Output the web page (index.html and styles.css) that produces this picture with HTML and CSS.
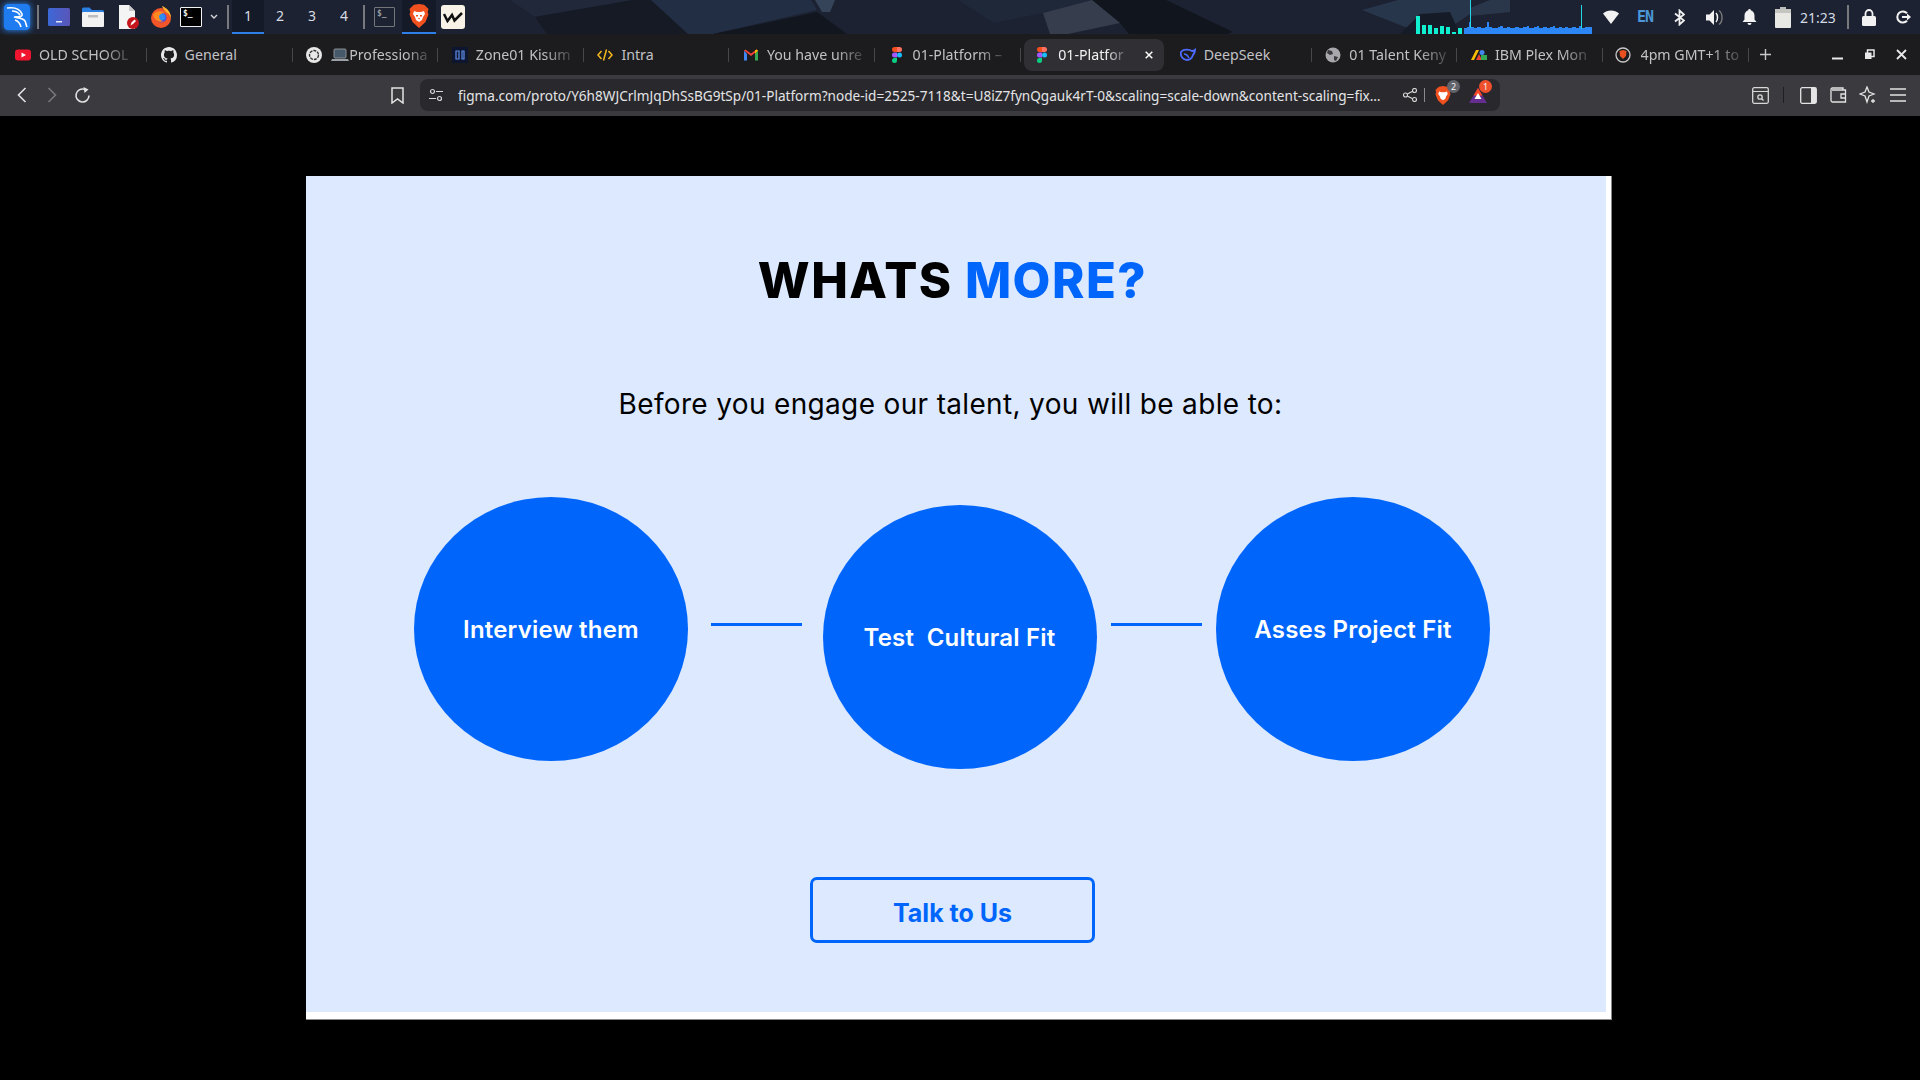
FILE: index.html
```html
<!DOCTYPE html>
<html lang="en">
<head>
    <meta charset="UTF-8">
    <meta name="viewport" content="width=device-width, initial-scale=1.0">
    <title>01-Platform</title>
    <link rel="stylesheet" href="styles.css">
</head>
<body>

    <!-- Desktop panel -->
    <header class="panel">
        <svg class="wallpaper" viewBox="0 0 1920 34" preserveAspectRatio="none">
            <polygon points="510,0 633,0 535,17" fill="#20283a"/>
            <polygon points="535,17 633,0 651,0 688,34 547,34" fill="#151a25"/>
            <polygon points="651,0 811,0 817,10 713,34 688,34" fill="#222e44"/>
            <polygon points="713,34 817,12 847,34" fill="#12161f"/>
            <polygon points="815,0 835,0 830,12 822,12" fill="#36445a"/>
            <polygon points="958,0 1092,0 1043,13 994,23" fill="#1f2839"/>
            <polygon points="1092,0 1166,0 1233,32 1227,34 1129,34 1120,23" fill="#11151d"/>
            <polygon points="1043,13 1092,0 1120,23 1068,34 1050,34" fill="#363d4d"/>
            <polygon points="1362,10 1398,0 1470,0 1470,14 1440,34 1405,27" fill="#28364c"/>
            <polygon points="1400,34 1420,14 1450,12 1460,34" fill="#151b27"/>
            <polygon points="1470,16 1510,12 1510,0 1490,0 1470,8" fill="#2a374b"/>
        </svg>

        <div class="panel-left">
            <svg class="pi-kali" width="26" height="26" viewBox="0 0 26 26">
                <rect width="26" height="26" rx="3" fill="#1f7cf0"/>
                <path d="M3 4c7-1 13 1 15 6 1 3-4 3-8 3 4 1 9 1 11 4 1 2 1 4 2 6M8 7c3 0 6 1 8 4M11 16c3 1 5 3 6 7" fill="none" stroke="#fff" stroke-width="1.600"/>
            </svg>
            <span class="panel-sep pi-sep1"></span>
            <svg class="pi-win" width="22" height="18" viewBox="0 0 22 18">
                <defs><linearGradient id="winGrad" x1="0" x2="1"><stop offset="0" stop-color="#3c68d8"/><stop offset="1" stop-color="#5a55b8"/></linearGradient></defs>
                <rect width="22" height="18" rx="1.500" fill="url(#winGrad)"/>
                <rect x="8" y="13" width="6" height="1.500" fill="#dfe4f6"/>
            </svg>
            <svg class="pi-files" width="22" height="20" viewBox="0 0 22 20">
                <path d="M0 2a1.500 1.500 0 0 1 1.500-1.500h6L10 3h10.500a1.500 1.500 0 0 1 1.500 1.500V8H0z" fill="#2a7fe0"/>
                <rect y="5" width="22" height="15" rx="1" fill="#f2f2f2"/>
                <rect x="6" y="8" width="10" height="2.500" fill="#bdbdbd"/>
            </svg>
            <svg class="pi-doc" width="21" height="24" viewBox="0 0 21 24">
                <path d="M1 0h10l6 6v18H1z" fill="#f4f4f4"/>
                <path d="M11 0l6 6h-6z" fill="#c9c9c9"/>
                <circle cx="15" cy="18" r="6" fill="#c4161c"/>
                <path d="M12.500 20.500l1-3 3-3 1.500 1.500-3 3z" fill="#fff"/>
            </svg>
            <svg class="pi-firefox" width="20" height="22" viewBox="0 0 20 22">
                <circle cx="10" cy="12" r="10" fill="#f2552a"/>
                <path d="M11 0c5 2 9 6 9 12-1-3-3-5-5-6-1-2-3-3-4-6z" fill="#ffb52e"/>
                <circle cx="10.500" cy="11.500" r="5" fill="#5a3fd6"/>
                <circle cx="11" cy="11" r="3.500" fill="#2f8cf0"/>
                <path d="M2 9c2-4 8-5 12-2-3 0-5 1-6 3 0 3 2 5 5 5-4 2-9 0-11-6z" fill="#ff8a1f"/>
            </svg>
            <span class="term pi-term">$_</span>
            <svg class="pi-chev" width="8" height="6" viewBox="0 0 8 6"><path d="M1 1l3 3 3-3" fill="none" stroke="#d8d8d8" stroke-width="1.400"/></svg>
            <span class="panel-sep pi-sep2"></span>
            <div class="workspaces">
                <span class="ws ws-on">1</span>
                <span class="ws">2</span>
                <span class="ws">3</span>
                <span class="ws">4</span>
            </div>
            <span class="panel-sep pi-sep3"></span>
            <span class="term term-dim pi-term2">$_</span>
            <span class="app-on">
                <svg width="20" height="24" viewBox="0 0 20 24">
                    <path d="M10 0l5 .8 2 1.700 2.500 2.500-.8 3 .8 2.500-3 7.500L10 24l-6.500-6L.5 10.500l.8-2.500-.8-3L3 2.500 5 .8z" fill="#f1501f"/>
                    <path d="M5 7l3 1h4l3-1 1 3-2 3-1 3-3 2-3-2-1-3-2-3z" fill="#fff"/>
                    <path d="M7 11h2v1.500H7zM11 11h2v1.500h-2zM9 14h2l-1 1.500z" fill="#f1501f"/>
                </svg>
            </span>
            <span class="w-logo">
                <svg width="20" height="11" viewBox="0 0 20 11"><path d="M1 2l3.500 7L9 3l2.500 5.500L19 1" fill="none" stroke="#111" stroke-width="2.500"/></svg>
            </span>
        </div>

        <div class="panel-right">
            <svg class="graph" width="176" height="34" viewBox="0 0 176 34">
                <g fill="#10f0d0">
                    <rect x="0" y="16" width="4" height="18"/>
                    <rect x="6" y="25" width="4" height="9"/>
                    <rect x="12" y="25" width="4" height="9"/>
                    <rect x="18" y="28" width="4" height="6"/>
                    <rect x="24" y="26" width="4" height="8"/>
                    <rect x="30" y="27" width="4" height="7"/>
                    <rect x="36" y="32" width="4" height="2"/>
                    <rect x="42" y="28" width="4" height="6"/>
                </g>
                <path d="M48 34V28h3v-1h2v-5h2v5h3v1h3v-1h4v1h4v-1h2v-5h2v5h3v1h6v-1h2v-1h3v2h4v-1h3v1h5v-1h4v1h4v-1h4v-1h2v2h5v-1h3v-1h2v2h4v-1h4v1h3v-1h3v-1h2v2h4v-1h3v1h3v-1h3v1h4v-1h4v1h3v-2h2v2h4v-1h7v7z" fill="#2d86f5"/>
                <rect x="54" y="0" width="1" height="28" fill="#22d8e8"/>
                <rect x="165" y="5" width="1" height="24" fill="#22d8e8"/>
            </svg>
            <span class="tray">
                <svg width="16" height="14" viewBox="0 0 16 14"><path d="M0 3.500C4-.5 12-.5 16 3.500L8 14z" fill="#f2f2f2"/></svg>
            </span>
            <span class="tray tray-lang">EN</span>
            <span class="tray tray-bt">
                <svg width="11" height="17" viewBox="0 0 11 17"><path d="M1 4.500l9 7-4.500 4v-14l4.500 4-9 7" fill="none" stroke="#f2f2f2" stroke-width="1.800"/></svg>
            </span>
            <span class="tray">
                <svg width="18" height="17" viewBox="0 0 18 17"><path d="M0 5.500h3.500L8 1v15l-4.500-4.500H0z" fill="#f2f2f2"/><path d="M10 4c2 2 2 7 0 9" fill="none" stroke="#f2f2f2" stroke-width="1.500"/><path d="M13 1.500c4 3 4 11 0 14" fill="none" stroke="#777" stroke-width="1.500"/></svg>
            </span>
            <span class="tray">
                <svg width="15" height="16" viewBox="0 0 15 16"><path d="M7.500 0c.8 0 1.200.5 1.200 1.200C11 2 12.500 4 12.500 6.500v4l2 2.500H.5l2-2.500v-4C2.500 4 4 2 6.300 1.200 6.300.5 6.700 0 7.500 0z" fill="#f2f2f2"/><path d="M5.500 14h4a2 2 0 0 1-4 0z" fill="#f2f2f2"/></svg>
            </span>
            <span class="tray">
                <svg width="16" height="21" viewBox="0 0 16 21"><rect x="5" width="6" height="2" fill="#bbb"/><rect y="2" width="16" height="19" rx="1" fill="#e8e8e4"/><rect y="2" width="16" height="4" fill="#c4c4c0"/></svg>
            </span>
            <span class="clock">21:23</span>
            <span class="panel-sep pi-sep4"></span>
            <span class="tray tray-lock">
                <svg width="14" height="17" viewBox="0 0 14 17"><path d="M3.500 8V4.500a3.500 3.500 0 0 1 7 0V8" fill="none" stroke="#f2f2f2" stroke-width="1.800"/><rect y="7" width="14" height="10" rx="1.500" fill="#f2f2f2"/></svg>
            </span>
            <span class="tray">
                <svg width="15" height="14" viewBox="0 0 15 14"><path d="M11 3.200A5.600 5.600 0 1 0 11 10.800" fill="none" stroke="#f2f2f2" stroke-width="2"/><path d="M6 7h6" stroke="#f2f2f2" stroke-width="2"/><path d="M11 3.500L15 7l-4 3.500z" fill="#f2f2f2"/></svg>
            </span>
        </div>
    </header>

    <!-- Browser tabs -->
    <nav class="tabs">
        <div class="tab">
            <svg class="favicon" viewBox="0 0 16 16"><rect y="2.500" width="16" height="11" rx="3" fill="#f0142f"/><path d="M6.500 5.500v5L11 8z" fill="#fff"/></svg>
            <span class="tab-title tab-fade">OLD SCHOOL</span>
        </div>
        <div class="tab">
            <svg class="favicon" viewBox="0 0 16 16"><path fill="#e8e8e8" d="M8 0C3.580 0 0 3.580 0 8c0 3.540 2.290 6.530 5.470 7.590.4.070.55-.17.55-.38 0-.19-.01-.82-.01-1.490-2.010.37-2.530-.49-2.690-.94-.09-.23-.48-.94-.82-1.130-.28-.15-.68-.52-.01-.53.630-.01 1.080.58 1.230.82.720 1.210 1.870.87 2.330.66.070-.52.280-.87.510-1.070-1.780-.2-3.640-.89-3.640-3.950 0-.87.31-1.590.82-2.150-.08-.2-.36-1.020.08-2.120 0 0 .67-.21 2.200.82.640-.18 1.320-.27 2-.27s1.360.09 2 .27c1.530-1.040 2.200-.82 2.200-.82.44 1.100.16 1.920.08 2.120.51.560.82 1.270.82 2.150 0 3.070-1.870 3.750-3.650 3.950.29.250.54.730.54 1.480 0 1.070-.01 1.930-.01 2.200 0 .21.150.46.550.38A8.010 8.010 0 0 0 16 8c0-4.420-3.580-8-8-8z"/></svg>
            <span class="tab-title">General</span>
        </div>
        <div class="tab">
            <svg class="favicon" viewBox="0 0 16 16"><circle cx="8" cy="8" r="8" fill="#e8e8e8"/><circle cx="8" cy="8" r="4.500" fill="none" stroke="#333" stroke-width="1.400" stroke-dasharray="3 1"/></svg>
            <svg class="laptop" width="18" height="16" viewBox="0 0 18 16"><rect x="3" y="2" width="12" height="9" rx="1" fill="#46596b" stroke="#8a8f94"/><path d="M1 12h16l1 2H0z" fill="#9aa0a6"/></svg>
            <span class="tab-title tab-fade">Professiona</span>
        </div>
        <div class="tab">
            <svg class="favicon" viewBox="0 0 16 16"><rect width="16" height="16" fill="#0d1530"/><path d="M4 4h3v8H4zM10 4h2v8h-2z" fill="none" stroke="#5f8fe8" stroke-width="1.200"/></svg>
            <span class="tab-title tab-fade">Zone01 Kisum</span>
        </div>
        <div class="tab">
            <svg class="favicon" viewBox="0 0 16 16"><path d="M4.500 4L1 8l3.500 4M11.500 4L15 8l-3.500 4M9.500 2.500l-3 11" fill="none" stroke="#f5b81c" stroke-width="1.500"/></svg>
            <span class="tab-title">Intra</span>
        </div>
        <div class="tab">
            <svg class="favicon" viewBox="0 0 16 16"><path d="M1 3.500V13.500h3V7z" fill="#4285f4"/><path d="M15 3.500V13.500h-3V7z" fill="#34a853"/><path d="M1 3.500L8 9l7-5.500-1.500-1L8 6.500 2.500 2.500z" fill="#ea4335"/><path d="M12 3.500l1.500-1L15 3.500 12 7z" fill="#fbbc04"/></svg>
            <span class="tab-title tab-fade">You have unre</span>
        </div>
        <div class="tab">
            <svg class="favicon" viewBox="0 0 16 16"><use href="#figmaMark"/></svg>
            <span class="tab-title tab-fade">01-Platform –</span>
        </div>
        <div class="tab tab-active">
            <svg class="favicon" viewBox="0 0 16 16">
                <g id="figmaMark">
                    <path d="M3 2.500A2.500 2.500 0 0 1 5.500 0H8v5H5.500A2.500 2.500 0 0 1 3 2.500z" fill="#f24e1e"/>
                    <path d="M8 0h2.500a2.500 2.500 0 0 1 0 5H8z" fill="#ff7262"/>
                    <path d="M3 8a2.500 2.500 0 0 1 2.500-2.500H8v5H5.500A2.500 2.500 0 0 1 3 8z" fill="#a259ff"/>
                    <circle cx="10.500" cy="8" r="2.500" fill="#1abcfe"/>
                    <path d="M3 13.500A2.500 2.500 0 0 1 5.500 11H8v2.500a2.500 2.500 0 0 1-5 0z" fill="#0acf83"/>
                </g>
            </svg>
            <span class="tab-title tab-fade">01-Platfor</span>
            <svg class="tab-close" width="8" height="8" viewBox="0 0 8 8"><path d="M.7.7l6.600 6.600M7.300.7L.7 7.300" stroke="#fff" stroke-width="1.500"/></svg>
        </div>
        <div class="tab">
            <svg class="favicon" viewBox="0 0 16 16"><path d="M15 3c-1 1-2 1-3 1C9 2 3 2 1 5c-1 4 2 8 6 8 3 0 5-2 6-5 1-1 2-3 2-5z" fill="none" stroke="#4d6bfe" stroke-width="1.800"/><path d="M4 7c2 0 4 2 5 4" fill="none" stroke="#4d6bfe" stroke-width="1.500"/></svg>
            <span class="tab-title">DeepSeek</span>
        </div>
        <div class="tab">
            <svg class="favicon" viewBox="0 0 16 16"><circle cx="8" cy="8" r="7.500" fill="#a8a8ac"/><path d="M3 3l4 1 1 3-3 1-3-2zM9 9l4 1-2 4-2-1z" fill="#3a3a3e"/></svg>
            <span class="tab-title tab-fade">01 Talent Keny</span>
        </div>
        <div class="tab">
            <svg class="favicon" viewBox="0 0 16 16"><path d="M0 13L5 3h3L3 13z" fill="#fbbc04"/><path d="M5 13L8 7l3 6z" fill="#ea4335"/><circle cx="11" cy="5.500" r="2.500" fill="#4285f4"/><rect x="10" y="8" width="6" height="5" fill="#34a853"/></svg>
            <span class="tab-title tab-fade">IBM Plex Mon</span>
        </div>
        <div class="tab tab-talk">
            <svg class="favicon" viewBox="0 0 16 16"><circle cx="8" cy="8" r="7" fill="none" stroke="#c8c8c8" stroke-width="1.300"/><path d="M8 3l3.500 1-.5 5-3 3-3-3-.5-5z" fill="#e8501f"/></svg>
            <span class="tab-title tab-fade">4pm GMT+1 to</span>
        </div>
        <svg class="tab-new" width="11" height="11" viewBox="0 0 11 11"><path d="M5.500 0v11M0 5.500h11" stroke="#c8c8c8" stroke-width="1.400"/></svg>
        <div class="win-btns">
            <svg width="11" height="11" viewBox="0 0 11 11"><path d="M0 9.500h11" stroke="#e8e8e8" stroke-width="2"/></svg>
            <svg width="11" height="11" viewBox="0 0 11 11"><path d="M3.500 1h6.500v6.500H3.500z" fill="none" stroke="#e8e8e8" stroke-width="1.500"/><path d="M1 3.500h6.500V10H1z" fill="#e8e8e8"/></svg>
            <svg width="11" height="11" viewBox="0 0 11 11"><path d="M1 1l9 9M10 1l-9 9" stroke="#e8e8e8" stroke-width="1.800"/></svg>
        </div>
    </nav>

    <!-- Address bar -->
    <div class="toolbar">
        <span class="tool tool-first"><svg width="10" height="16" viewBox="0 0 10 16"><path d="M8.500 1L1.500 8l7 7" fill="none" stroke="#e4e4e4" stroke-width="1.600"/></svg></span>
        <span class="tool"><svg width="10" height="16" viewBox="0 0 10 16"><path d="M1.500 1l7 7-7 7" fill="none" stroke="#77777c" stroke-width="1.600"/></svg></span>
        <span class="tool"><svg width="17" height="17" viewBox="0 0 17 17"><path d="M15 8.500A6.500 6.500 0 1 1 10.500 2.300" fill="none" stroke="#e4e4e4" stroke-width="1.600"/><path d="M9.500 0l5 2.500-4 3.500z" fill="#e4e4e4"/></svg></span>
        <span class="tool tool-bookmark"><svg width="13" height="17" viewBox="0 0 13 17"><path d="M1 1h11v15l-5.500-4L1 16z" fill="none" stroke="#e4e4e4" stroke-width="1.500"/></svg></span>
        <div class="urlbar">
            <svg class="url-site" width="14" height="14" viewBox="0 0 14 14"><g fill="none" stroke="#d8d8d8" stroke-width="1.200"><circle cx="3.500" cy="3.500" r="2"/><path d="M7 3.500h7M0 10.500h7"/><circle cx="10.500" cy="10.500" r="2"/></g></svg>
            <span class="url-text">figma.com/proto/Y6h8WJCrlmJqDhSsBG9tSp/01-Platform?node-id=2525-7118&amp;t=U8iZ7fynQgauk4rT-0&amp;scaling=scale-down&amp;content-scaling=fix…</span>
            <svg class="url-share" width="14" height="14" viewBox="0 0 14 14"><g fill="none" stroke="#d8d8d8" stroke-width="1.100"><circle cx="2.500" cy="7" r="2"/><circle cx="11.500" cy="2.500" r="2"/><circle cx="11.500" cy="11.500" r="2"/><path d="M4.300 6l5.400-2.700M4.300 8l5.400 2.700"/></g></svg>
            <span class="url-sep"></span>
            <span class="shield">
                <svg width="16" height="19" viewBox="0 0 20 24"><path d="M10 0l5 .8 2 1.700 2.500 2.500-.8 3 .8 2.500-3 7.500L10 24l-6.500-6L.5 10.500l.8-2.500-.8-3L3 2.500 5 .8z" fill="#f1501f"/><path d="M5 7l3 1h4l3-1 1 3-2 3-1 3-3 2-3-2-1-3-2-3z" fill="#fff"/></svg>
                <span class="badge badge-grey">2</span>
            </span>
            <span class="shield shield-bat">
                <svg width="18" height="15" viewBox="0 0 18 15"><path d="M9 0l9 15H0z" fill="#662d91"/><path d="M9 0l4.500 7.500h-9z" fill="#ff4724"/><path d="M9 5l3.500 6h-7z" fill="#fff"/></svg>
                <span class="badge badge-red">1</span>
            </span>
        </div>
        <span class="tool tool-reader"><svg width="17" height="17" viewBox="0 0 17 17"><rect x=".7" y=".7" width="15.600" height="15.600" rx="1.500" fill="none" stroke="#d8d8d8" stroke-width="1.300"/><path d="M1 4.500h15" stroke="#d8d8d8"/><circle cx="8" cy="10" r="2.200" fill="none" stroke="#d8d8d8" stroke-width="1.300"/><path d="M9.800 11.800l1.700 1.700" stroke="#d8d8d8" stroke-width="1.300"/></svg></span>
        <span class="tool-sep"></span>
        <span class="tool"><svg width="17" height="17" viewBox="0 0 17 17"><rect x=".7" y=".7" width="15.600" height="15.600" rx="1.500" fill="none" stroke="#e4e4e4" stroke-width="1.300"/><rect x="11" y="1" width="5" height="15" fill="#e4e4e4"/></svg></span>
        <span class="tool"><svg width="17" height="16" viewBox="0 0 17 16"><path d="M13 3V1H2.500A1.500 1.500 0 0 0 1 2.500v11A1.500 1.500 0 0 0 2.500 15h13V3H2" fill="none" stroke="#e4e4e4" stroke-width="1.300"/><path d="M16 7h-5v4h5" fill="none" stroke="#e4e4e4" stroke-width="1.300"/></svg></span>
        <span class="tool"><svg width="18" height="18" viewBox="0 0 18 18"><path d="M8 1l2 5 5 2-5 2-2 6-2-6-5-2 5-2z" fill="none" stroke="#e4e4e4" stroke-width="1.300"/><path d="M14 13v4M12 15h4" stroke="#e4e4e4" stroke-width="1.300"/></svg></span>
        <span class="tool"><svg width="16" height="14" viewBox="0 0 16 14"><path d="M0 1h16M0 7h16M0 13h16" stroke="#e4e4e4" stroke-width="1.500"/></svg></span>
    </div>

    <!-- Figma prototype frame -->
    <main class="viewer">
        <section class="frame">
            <div class="slide">
                <h1 class="slide-title">WHATS <span class="accent">MORE?</span></h1>
                <p class="slide-sub">Before you engage our talent, you will be able to:</p>

                <div class="steps">
                    <div class="step">Interview them</div>
                    <span class="step-line step-line-a"></span>
                    <div class="step step-low">Test&nbsp; Cultural Fit</div>
                    <span class="step-line step-line-b"></span>
                    <div class="step step-last">Asses Project Fit</div>
                </div>

                <button class="talk" type="button">Talk to Us</button>
            </div>
        </section>
    </main>

</body>
</html>
```

FILE: styles.css
```css
* {
    box-sizing: border-box;
}

html, body {
    margin: 0;
    height: 100%;
}

body {
    width: 1920px;
    height: 1080px;
    overflow: hidden;
    background: #000;
    font-family: "Noto Sans", sans-serif;
    display: flex;
    flex-direction: column;
}

svg {
    display: block;
    flex: none;
}

/* desktop panel */
.panel {
    position: relative;
    height: 34px;
    flex: none;
    background: #1c2231;
    display: flex;
    justify-content: space-between;
    align-items: center;
}

.wallpaper {
    position: absolute;
    left: 0;
    top: 0;
    width: 100%;
    height: 100%;
}

.panel-left, .panel-right {
    position: relative;
    height: 34px;
    display: flex;
    align-items: center;
}

.panel-left {
    padding-left: 4px;
}

.panel-sep {
    width: 2px;
    height: 24px;
    background: #77797f;
    flex: none;
}

.pi-kali {
    box-shadow: 0 0 6px #2a8cff;
    border-radius: 3px;
}
.pi-sep1 { margin-left: 7px; }
.pi-win { margin-left: 9px; }
.pi-files { margin-left: 12px; }
.pi-doc { margin-left: 14px; }
.pi-firefox { margin-left: 12px; }
.pi-term { margin-left: 9px; }
.pi-chev { margin-left: 8px; }
.pi-sep2 { margin-left: 9px; }
.pi-sep3 { margin-left: 3px; }
.pi-term2 { margin-left: 9px; }
.pi-sep4 { margin-left: 11px; }

.term {
    width: 22px;
    height: 20px;
    background: #000;
    border: 1px solid #f2f2f2;
    border-radius: 1px;
    color: #f2f2f2;
    font-family: "DejaVu Sans Mono", monospace;
    font-size: 8px;
    font-weight: 700;
    line-height: 12px;
    padding-left: 2px;
    flex: none;
}

.term-dim {
    width: 21px;
    background: transparent;
    border-color: #74767c;
    color: #9a9ca2;
}

.workspaces {
    margin-left: 3px;
    display: flex;
}

.ws {
    width: 32px;
    height: 34px;
    line-height: 32px;
    text-align: center;
    color: #d8dce2;
    font-size: 14px;
}

.ws-on {
    background: #141a27;
    border-bottom: 2px solid #2f7fe8;
}

.app-on {
    margin-left: 7px;
    width: 34px;
    height: 34px;
    background: #141a27;
    border-bottom: 2px solid #2f7fe8;
    display: flex;
    align-items: center;
    justify-content: center;
}

.w-logo {
    margin-left: 5px;
    width: 24px;
    height: 24px;
    border-radius: 3px;
    background: #f8f3e6;
    display: flex;
    align-items: center;
    justify-content: center;
}

.graph {
    margin-right: 2px;
}

.tray {
    width: 34px;
    height: 34px;
    display: flex;
    align-items: center;
    justify-content: center;
    flex: none;
}

.tray-lang {
    color: #4b97d8;
    font-size: 15px;
    font-weight: 700;
    font-family: "DejaVu Sans Mono", monospace;
    letter-spacing: -1px;
}

.tray-bt {
    margin-right: 2px;
}

.tray-lock {
    margin-left: 3px;
}

.clock {
    width: 36px;
    text-align: center;
    color: #d4dbe4;
    font-size: 14px;
    flex: none;
}

/* tab strip */
.tabs {
    height: 41px;
    flex: none;
    background: #1c1c1f;
    display: flex;
    align-items: center;
    padding-left: 1.5px;
}

.tab {
    position: relative;
    width: 145.6px;
    height: 32px;
    flex: none;
    display: flex;
    align-items: center;
    padding-left: 13.5px;
    padding-right: 8px;
}

.tab::after {
    content: "";
    position: absolute;
    right: 0;
    top: 9px;
    height: 14px;
    width: 1px;
    background: #47474b;
}

.tab-active::after {
    display: none;
}

.tab-active::before {
    content: "";
    position: absolute;
    left: 3px;
    right: 2px;
    top: 0;
    bottom: 0;
    border-radius: 8px;
    background: #303034;
}

.tab-active > * {
    position: relative;
}

.tab-talk .favicon {
    margin-left: -2px;
    margin-right: 2px;
}

.favicon {
    width: 16px;
    height: 16px;
}

.laptop {
    margin-left: 9px;
}

.tab-title {
    margin-left: 8px;
    white-space: nowrap;
    color: #c2c2c6;
    font-size: 14.2px;
    line-height: 20px;
}

/* long titles run out under a fade, as the browser does it */
.tab-fade {
    -webkit-mask-image: linear-gradient(to right, #000 72%, rgba(0, 0, 0, 0.25) 100%);
    mask-image: linear-gradient(to right, #000 72%, rgba(0, 0, 0, 0.25) 100%);
}

.laptop + .tab-title {
    margin-left: 0;
}

.tab-active .tab-title {
    color: #f2f2f2;
}

.tab-close {
    margin: 0 5px 0 auto;
}

.tab-new {
    margin-left: 11px;
}

.win-btns {
    margin-left: auto;
    padding-right: 13px;
    display: flex;
    gap: 21px;
    flex: none;
}

/* address bar */
.toolbar {
    height: 41px;
    flex: none;
    background: #3a3a3f;
    padding-bottom: 1px;
    display: flex;
    align-items: center;
}

.tool {
    width: 30px;
    height: 30px;
    flex: none;
    display: flex;
    align-items: center;
    justify-content: center;
}

.tool-first {
    margin-left: 7px;
}

.tool-bookmark {
    margin-left: 285px;
}

.urlbar {
    margin-left: 8px;
    width: 1080px;
    height: 32px;
    border-radius: 8px;
    background: #29292d;
    display: flex;
    align-items: center;
    flex: none;
}

.url-site {
    margin-left: 9px;
}

.url-text {
    margin-left: 15px;
    width: 934px;
    flex: none;
    color: #e4e4e6;
    font-size: 13.6px;
    white-space: nowrap;
}

.url-share {
    margin-left: 11px;
}

.url-sep {
    margin-left: 7px;
    width: 1px;
    height: 14px;
    background: #8a8a8e;
    flex: none;
}

.shield {
    position: relative;
    margin-left: 10px;
    flex: none;
}

.shield-bat {
    margin-left: 18px;
}

.badge {
    position: absolute;
    top: -6px;
    right: -9px;
    width: 13px;
    height: 13px;
    border-radius: 50%;
    color: #f4f4f4;
    font-size: 9px;
    line-height: 13px;
    text-align: center;
}

.badge-grey {
    background: #62646c;
}

.badge-red {
    background: #f0502c;
    top: -8px;
    right: -5px;
}

.tool-reader {
    margin-left: 245px;
}

.tool-sep {
    margin: 0 9px 0 8px;
    width: 1px;
    height: 16px;
    background: #1f1f22;
    flex: none;
}

/* prototype viewer */
.viewer {
    flex: 1;
    background: #000;
    padding: 60px 0 0 306px;
}

.frame {
    width: 1306px;
    height: 844px;
    background: #fff;
    border-right: 1px solid #8a8a8a;
    border-bottom: 1px solid #8a8a8a;
}

.slide {
    width: 1300px;
    height: 836px;
    background: #dce9fe;
    padding-right: 7px;
    display: flex;
    flex-direction: column;
    align-items: center;
}

.slide-title {
    margin: 75px 0 0;
    color: #000;
    font-family: Inter, sans-serif;
    font-size: 49px;
    font-weight: 800;
    line-height: 60px;
    letter-spacing: 1.5px;
}

.accent {
    color: #0065fb;
}

.slide-sub {
    margin: 73px 0 0 -4px;
    color: #000;
    font-family: Inter, sans-serif;
    font-size: 28px;
    font-weight: 400;
    line-height: 40px;
    letter-spacing: 0.34px;
}

.steps {
    align-self: flex-start;
    margin: 73px 0 0 108px;
    display: flex;
    align-items: flex-start;
}

.step {
    width: 274px;
    height: 264px;
    border-radius: 50%;
    background: #0065fb;
    color: #fff;
    font-family: Inter, sans-serif;
    font-size: 24px;
    font-weight: 600;
    letter-spacing: 0.2px;
    display: flex;
    align-items: center;
    justify-content: center;
    flex: none;
}

.step-low {
    margin-top: 8px;
}

.step-last {
    margin-left: 14px;
}

.step-line {
    width: 91px;
    height: 3px;
    margin-top: 126px;
    background: #0065fb;
    flex: none;
}

.step-line-a {
    margin-left: 23px;
    margin-right: 20.5px;
}

.step-line-b {
    margin-left: 14.5px;
}

.talk {
    margin-top: 108px;
    width: 285px;
    height: 66px;
    padding-top: 6px;
    background: transparent;
    border: 3px solid #0065fb;
    border-radius: 7px;
    color: #0065fb;
    font-family: Inter, sans-serif;
    font-size: 25px;
    font-weight: 700;
}
```
